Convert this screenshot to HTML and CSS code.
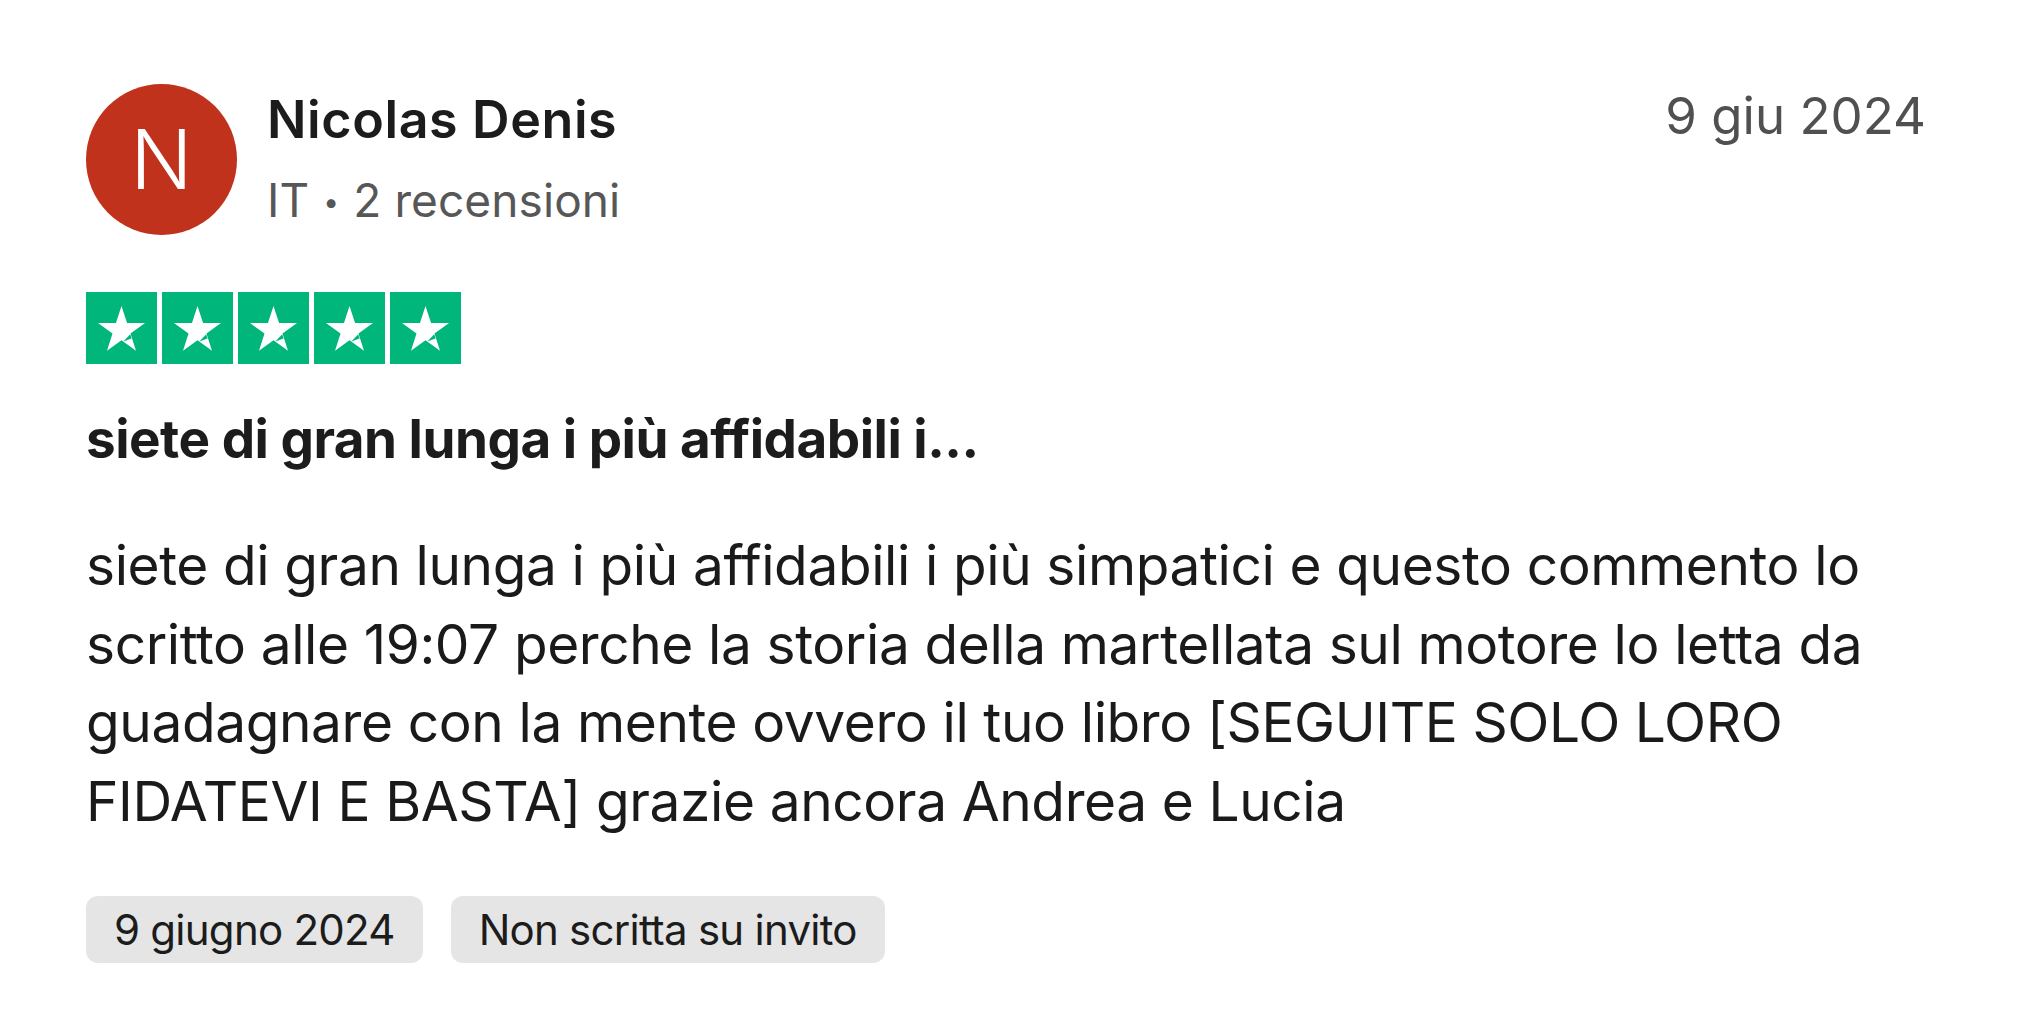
FILE: index.html
```html
<!DOCTYPE html>
<html lang="it">
<head>
<meta charset="utf-8">
<title>Recensione</title>
<link rel="stylesheet" href="styles.css">
</head>
<body>
<article class="review">
  <header class="review-head">
    <div class="avatar">N</div>
    <div class="who">
      <div class="name">Nicolas Denis</div>
      <div class="meta">IT <span class="dot">•</span> 2 recensioni</div>
    </div>
    <time class="date-top">9 giu 2024</time>
  </header>

  <div class="stars">
    <svg class="star" viewBox="0 0 71 72"><rect width="71" height="72" fill="#00b67a"/><polygon fill="#fff" points="35.5,14 41.05,31.07 59,31.1 44.47,41.61 50,58.7 35.5,48.13 21,58.7 26.53,41.61 12,31.1 29.95,31.07"/><polygon fill="#00b67a" points="44.2,42.3 45.6,46.6 37.3,49.6"/></svg>
    <svg class="star" viewBox="0 0 71 72"><rect width="71" height="72" fill="#00b67a"/><polygon fill="#fff" points="35.5,14 41.05,31.07 59,31.1 44.47,41.61 50,58.7 35.5,48.13 21,58.7 26.53,41.61 12,31.1 29.95,31.07"/><polygon fill="#00b67a" points="44.2,42.3 45.6,46.6 37.3,49.6"/></svg>
    <svg class="star" viewBox="0 0 71 72"><rect width="71" height="72" fill="#00b67a"/><polygon fill="#fff" points="35.5,14 41.05,31.07 59,31.1 44.47,41.61 50,58.7 35.5,48.13 21,58.7 26.53,41.61 12,31.1 29.95,31.07"/><polygon fill="#00b67a" points="44.2,42.3 45.6,46.6 37.3,49.6"/></svg>
    <svg class="star" viewBox="0 0 71 72"><rect width="71" height="72" fill="#00b67a"/><polygon fill="#fff" points="35.5,14 41.05,31.07 59,31.1 44.47,41.61 50,58.7 35.5,48.13 21,58.7 26.53,41.61 12,31.1 29.95,31.07"/><polygon fill="#00b67a" points="44.2,42.3 45.6,46.6 37.3,49.6"/></svg>
    <svg class="star" viewBox="0 0 71 72"><rect width="71" height="72" fill="#00b67a"/><polygon fill="#fff" points="35.5,14 41.05,31.07 59,31.1 44.47,41.61 50,58.7 35.5,48.13 21,58.7 26.53,41.61 12,31.1 29.95,31.07"/><polygon fill="#00b67a" points="44.2,42.3 45.6,46.6 37.3,49.6"/></svg>
  </div>

  <h2 class="title">siete di gran lunga i più affidabili i...</h2>

  <p class="text">siete di gran lunga i più affidabili i più simpatici e questo commento lo scritto alle 19:07 perche la storia della martellata sul motore lo letta da guadagnare con la mente ovvero il tuo libro [SEGUITE SOLO LORO FIDATEVI E BASTA] grazie ancora Andrea e Lucia</p>

  <div class="tags">
    <span class="tag">9 giugno 2024</span>
    <span class="tag">Non scritta su invito</span>
  </div>
</article>
</body>
</html>
```

FILE: styles.css
```css
html, body {
  margin: 0;
  padding: 0;
  background: #ffffff;
}

body {
  font-family: Inter, "Noto Sans", "Liberation Sans", sans-serif;
  color: #1a1a1a;
}

.review {
  padding: 84px 91px 40px 86px;
}

.review-head {
  display: flex;
  align-items: flex-start;
}

.avatar {
  width: 151px;
  height: 151px;
  border-radius: 50%;
  background: #c1321c;
  color: #ffffff;
  font-size: 82px;
  font-weight: 300;
  display: flex;
  align-items: center;
  justify-content: center;
  flex: none;
}

.who {
  margin-left: 30px;
  padding-top: 6px;
  flex: 1;
}

.name {
  font-size: 52px;
  font-weight: 600;
  line-height: 60px;
  letter-spacing: 0.6px;
  color: #1c1c1c;
}

.meta {
  font-size: 46px;
  line-height: 60px;
  margin-top: 20px;
  color: #575757;
  letter-spacing: 0.1px;
}

.dot {
  font-size: 28px;
  vertical-align: 5px;
  margin: 0 1px;
}

.date-top {
  font-size: 51px;
  line-height: 60px;
  padding-top: 2px;
  color: #505050;
}

.stars {
  display: flex;
  gap: 5px;
  margin-top: 57px;
}

.star {
  width: 71px;
  height: 72px;
  display: block;
}

.title {
  margin: 45px 0 0;
  font-size: 53px;
  font-weight: 700;
  line-height: 60px;
  letter-spacing: -0.5px;
  color: #1c1c1c;
}

.text {
  margin: 57px -30px 0 0;
  font-size: 55px;
  line-height: 78.5px;
  letter-spacing: -0.4px;
  color: #1a1a1a;
}

.tags {
  display: flex;
  gap: 28px;
  margin-top: 56px;
}

.tag {
  background: #e5e5e5;
  border-radius: 12px;
  height: 67px;
  padding: 0 28px;
  display: flex;
  align-items: center;
  font-size: 42px;
  letter-spacing: -0.75px;
  color: #1c1c1c;
}
```
